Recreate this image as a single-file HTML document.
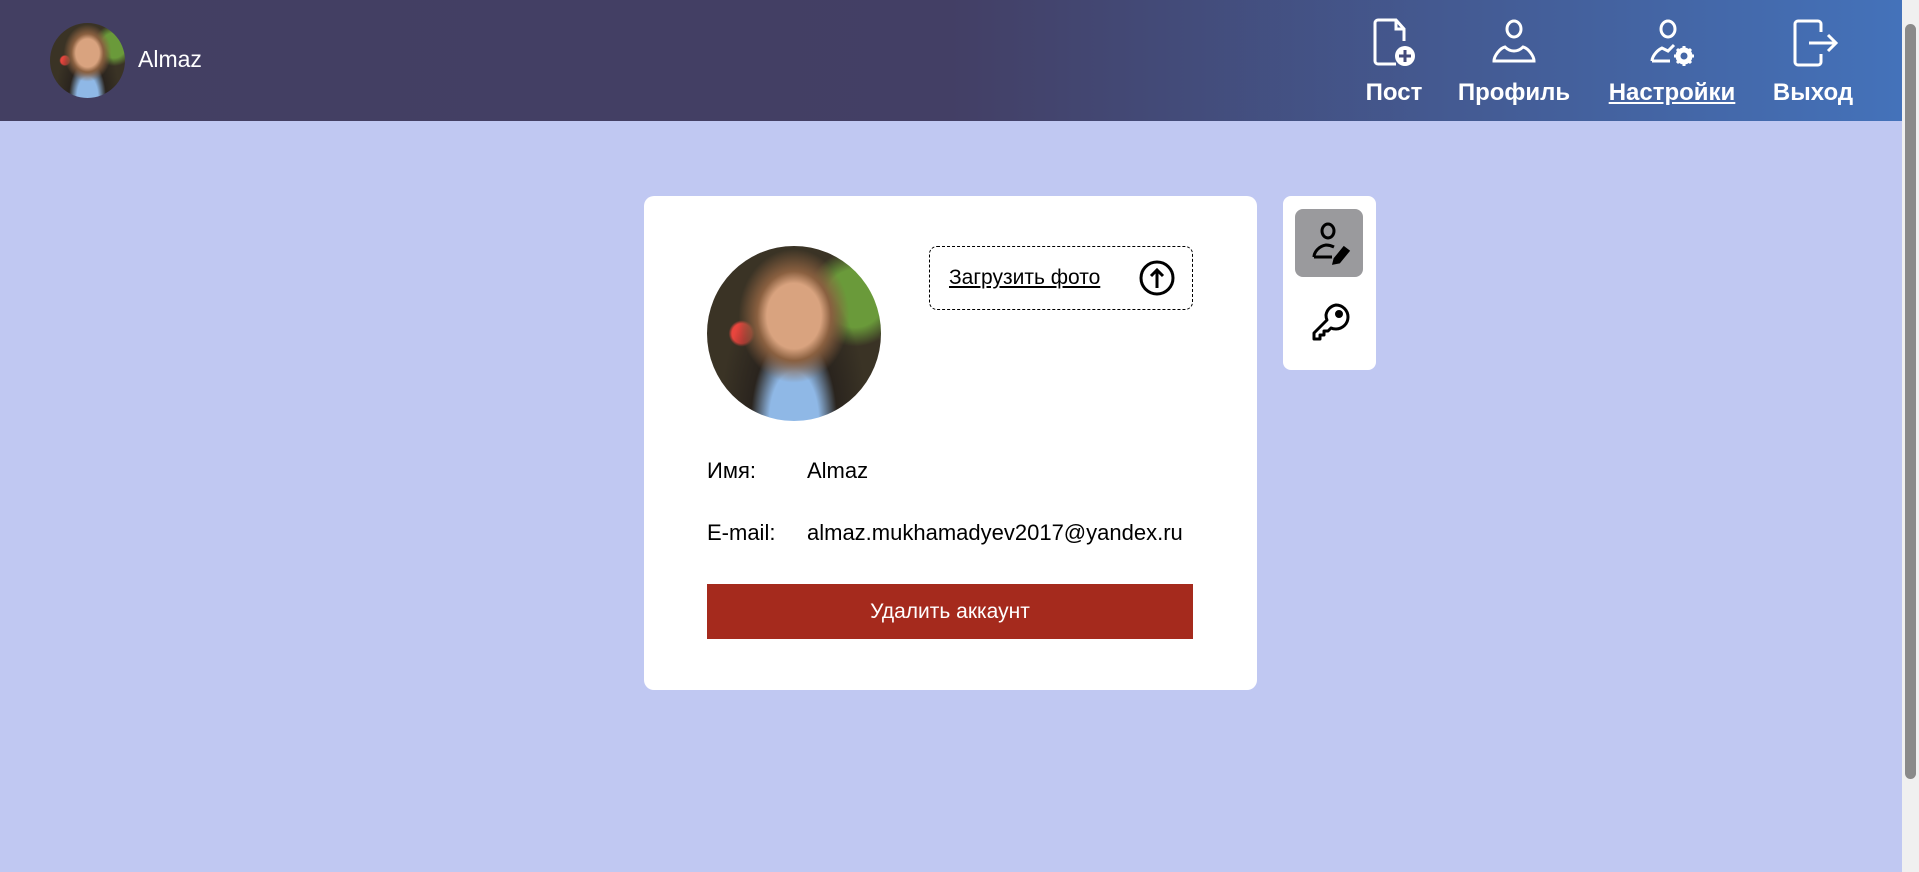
<!DOCTYPE html>
<html><head><meta charset="utf-8"><style>
*{margin:0;padding:0;box-sizing:border-box}
body{width:1919px;height:872px;overflow:hidden;background:#c0c8f2;font-family:"Liberation Sans","DejaVu Sans",sans-serif;position:relative}
.hdr{position:absolute;left:0;top:0;width:1902px;height:121px;background:linear-gradient(90deg,#433f62 0%,#433f65 50%,#4472ba 100%)}
.ph{background:radial-gradient(ellipse at 50% 40%,#d9a37f 0 22%,#8a6040 30%,transparent 45%),radial-gradient(ellipse at 50% 100%,#8fb8e6 0 20%,#2a241e 35%,transparent 60%),radial-gradient(circle at 20% 50%,#e8453d 0 6%,transparent 8%),radial-gradient(circle at 85% 30%,#6a9a3a 0 15%,transparent 25%),#3a3325;border-radius:50%;position:absolute}
.nav{position:absolute;top:0;color:#fff;font-weight:bold;font-size:24px;text-align:center}
.nav svg{position:absolute;top:18px}
.nav span{position:absolute;top:79px;white-space:nowrap;transform:translateX(-50%)}
.card{position:absolute;left:644px;top:196px;width:613px;height:494px;background:#fff;border-radius:10px}
.lbl{position:absolute;font-size:22px;color:#000}
</style></head><body>
<div class="hdr">
<div class="ph" style="left:50px;top:23px;width:75px;height:75px"></div>
<div style="position:absolute;left:138px;top:46px;color:#fff;font-size:23px">Almaz</div>
<div class="nav" style="left:1394px">
<svg style="left:-24px" width="48" height="50" viewBox="0 0 48 50" fill="none" stroke="#fff" stroke-width="3"><path d="M26 46H8a3 3 0 0 1-3-3V5a3 3 0 0 1 3-3h18l8 9v12M26 2v9h8"/><circle cx="35" cy="38" r="10" fill="#fff" stroke="none"/><path d="M35 32v12M29 38h12" stroke="#434a7a"/></svg>
<span>Пост</span></div>
<div class="nav" style="left:1514px">
<svg style="left:-24px" width="48" height="48" viewBox="0 0 48 48" fill="none" stroke="#fff" stroke-width="3"><ellipse cx="24" cy="11" rx="7" ry="8"/><path d="M4 43h40c0-5-6-13-11-14-3 3-6 4-9 4s-6-1-9-4C10 30 4 38 4 43z"/></svg>
<span>Профиль</span></div>
<div class="nav" style="left:1672px">
<svg style="left:-28px" width="56" height="50" viewBox="0 0 56 50" fill="none" stroke="#fff" stroke-width="3"><ellipse cx="24" cy="11" rx="7" ry="8"/><path d="M8 43h18M8 43c0-4 4-10 10-13l6 3 6-6"/><circle cx="40" cy="38" r="6" stroke-width="5"/><path d="M40 28v4M40 44v4M30 38h4M46 38h4M33 31l3 3M44 42l3 3M33 45l3-3M44 34l3-3" stroke-width="3"/></svg>
<span style="text-decoration:underline">Настройки</span></div>
<div class="nav" style="left:1813px">
<svg style="left:-24px" width="52" height="50" viewBox="0 0 52 50" fill="none" stroke="#fff" stroke-width="3"><path d="M32 14V6a3 3 0 0 0-3-3H9a3 3 0 0 0-3 3v38a3 3 0 0 0 3 3h20a3 3 0 0 0 3-3v-8M20 25h26M39 17l8 8-8 8"/></svg>
<span>Выход</span></div>
</div>
<div style="position:absolute;left:1902px;top:0;width:17px;height:872px;background:#f0f0f0"></div>
<div style="position:absolute;left:1905px;top:24px;width:11px;height:755px;background:#8a8a8a;border-radius:6px"></div>
<div class="card">
<div class="ph" style="left:63px;top:50px;width:174px;height:175px"></div>
<div style="position:absolute;left:285px;top:50px;width:264px;height:64px;border:1px dashed #000;border-radius:8px">
<div style="position:absolute;left:19px;top:19px;font-size:21px;text-decoration:underline">Загрузить фото</div>
<svg style="position:absolute;left:208px;top:12px" width="38" height="38" viewBox="0 0 38 38" fill="none" stroke="#000" stroke-width="3"><circle cx="19" cy="19" r="16"/><path d="M19 29V11M13 17l6-6 6 6"/></svg>
</div>
<div class="lbl" style="left:63px;top:262px">Имя:</div>
<div class="lbl" style="left:163px;top:262px">Almaz</div>
<div class="lbl" style="left:63px;top:324px">E-mail:</div>
<div class="lbl" style="left:163px;top:324px">almaz.mukhamadyev2017@yandex.ru</div>
<div style="position:absolute;left:63px;top:388px;width:486px;height:55px;background:#a52a1d;color:#fff;font-size:21px;text-align:center;line-height:55px">Удалить аккаунт</div>
</div>
<div style="position:absolute;left:1283px;top:196px;width:93px;height:174px;background:#fff;border-radius:8px">
<div style="position:absolute;left:12px;top:13px;width:68px;height:68px;background:#9a9a9d;border-radius:8px">
<svg style="position:absolute;left:14px;top:12px" width="42" height="44" viewBox="0 0 42 44" fill="none" stroke="#000" stroke-width="3"><ellipse cx="19" cy="10" rx="6" ry="7"/><path d="M5 36h18M5 36c0-5 5-11 12-12 3 0 6 1 8 2"/><path d="M26 38l9-11 4 3-9 11-5 1z" fill="#000"/></svg>
</div>
<svg style="position:absolute;left:26px;top:106px" width="42" height="42" viewBox="0 0 42 42" fill="none" stroke="#000" stroke-width="3" stroke-linejoin="round"><path d="M27 3a12 12 0 0 1 0 24c-2 0-3 0-5-1l-3 3h-4v4h-4v4H5v-6l13-13c-1-2-1-3-1-5A12 12 0 0 1 27 3z"/><circle cx="30" cy="12" r="2.5" fill="#000"/></svg>
</div>
</body></html>
